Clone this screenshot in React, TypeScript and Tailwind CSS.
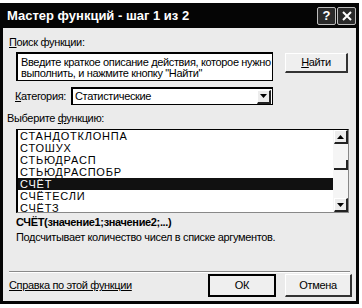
import React from 'react';

const functions = ['СТАНДОТКЛОНПА', 'СТОШУХ', 'СТЬЮДРАСП', 'СТЬЮДРАСПОБР', 'СЧЁТ', 'СЧЁТЕСЛИ', 'СЧЁТЗ'];

const ArrowUp = () => (
  <svg width="7" height="4" viewBox="0 0 7 4"><path d="M0 4 L3.5 0 L7 4 Z" fill="#000" /></svg>
);
const ArrowDown = () => (
  <svg width="7" height="4" viewBox="0 0 7 4"><path d="M0 0 L7 0 L3.5 4 Z" fill="#000" /></svg>
);

const ScrollButton: React.FC<{ children: React.ReactNode }> = ({ children }) => (
  <div className="w-[14px] h-[14px] flex items-center justify-center bg-[#ececec] border-r-2 border-b-2 border-r-[#222] border-b-[#222] border-t border-l border-t-white border-l-white">
    {children}
  </div>
);

export default function App() {
  const selected = 'СЧЁТ';

  return (
    <div className="w-[362px] h-[308px] bg-white pt-[3px] font-['Liberation_Sans',Arial,sans-serif] text-[11px] text-black">
      <div className="w-[359px] h-[301px] bg-[#050505] px-[3px] pb-[3px] flex flex-col">
        {/* Title bar */}
        <div className="h-[25px] flex items-center justify-between pl-[4px] shrink-0">
          <span className="text-white font-bold text-[13px]">Мастер функций - шаг 1 из 2</span>
          <div className="flex items-center gap-[1px]">
            <div className="w-[19px] h-[18px] rounded-[2px] border border-[#bdbdbd] bg-[#2a2a2a] flex items-center justify-center text-white font-bold text-[13px] leading-none">?</div>
            <div className="w-[19px] h-[18px] rounded-[2px] border border-[#bdbdbd] bg-[#2a2a2a] flex items-center justify-center">
              <svg width="10" height="10" viewBox="0 0 10 10"><path d="M1 1 L9 9 M9 1 L1 9" stroke="#fff" strokeWidth="2" /></svg>
            </div>
          </div>
        </div>

        {/* Body */}
        <div className="flex-1 bg-[#ebebeb] flex flex-col tracking-[-0.35px]">
          <div className="pl-[6px] mt-[8px] h-[13px] leading-[13px]">
            <span className="underline">П</span>оиск функции:
          </div>

          <div className="flex items-start mt-[3px] pl-[13px]">
            <div className="w-[257px] h-[29px] bg-white border border-black border-t-2 border-l-2 pl-[3px] pt-[3px] leading-[11px] whitespace-nowrap overflow-hidden">
              Введите краткое описание действия, которое нужно<br />
              выполнить, и нажмите кнопку "Найти"
            </div>
            <button className="ml-[12px] mt-[1px] w-[63px] h-[20px] bg-[#efefef] border border-t-white border-l-white border-r-[#333] border-b-[#333] border-r-2 border-b-2">
              <span className="underline">Н</span>айти
            </button>
          </div>

          <div className="flex items-center mt-[6px] pl-[12px] h-[18px]">
            <span className="w-[56px]"><span className="underline">К</span>атегория:</span>
            <div className="w-[202px] h-[18px] bg-white border border-black border-t-2 border-l-2 flex items-center justify-between pl-[2px]">
              <span>Статистические</span>
              <div className="w-[14px] h-[14px] mr-[1px] bg-[#ececec] border-r-2 border-b-2 border-r-[#222] border-b-[#222] border-t border-l border-t-white border-l-white flex items-center justify-center">
                <ArrowDown />
              </div>
            </div>
          </div>

          <div className="pl-[4px] mt-[7px] h-[13px] leading-[13px]">
            Выберите <span className="underline">ф</span>ункцию:
          </div>

          <div className="ml-[13px] mt-[4px] w-[333px] h-[84px] bg-white border border-black border-l-2 border-r-[#888] border-b-[#888] flex">
            <div className="flex-1 flex flex-col tracking-[0.8px]">
              {functions.map((f) => (
                <div
                  key={f}
                  className={
                    f === selected
                      ? 'h-[12px] leading-[12px] pl-[2px] bg-[#111] text-white'
                      : 'h-[12px] leading-[12px] pl-[2px]'
                  }
                >
                  {f}
                </div>
              ))}
            </div>
            <div className="w-[15px] bg-[#f5f5f5] flex flex-col justify-between items-end">
              <ScrollButton><ArrowUp /></ScrollButton>
              <div className="w-[14px] h-[10px] border-r-2 border-b-2 border-r-[#222] border-b-[#222] -mt-[12px]" />
              <ScrollButton><ArrowDown /></ScrollButton>
            </div>
          </div>

          <div className="pl-[13px] mt-[3px] font-bold h-[13px] leading-[13px]">СЧЁТ(значение1;значение2;...)</div>
          <div className="pl-[13px] mt-[2px] h-[13px] leading-[13px]">Подсчитывает количество чисел в списке аргументов.</div>

          <div className="mx-[6px] mt-[27px] h-[2px] border-t border-t-[#8a8a8a] border-b border-b-white" />

          <div className="flex items-center mt-[1px] pl-[6px]">
            <span className="underline flex-1">Справка по этой функции</span>
            <button className="w-[68px] h-[23px] bg-[#efefef] border-2 border-black">ОК</button>
            <button className="ml-[9px] mr-[4px] w-[67px] h-[23px] bg-[#efefef] border border-t-white border-l-white border-r-[#333] border-b-[#333] border-r-2 border-b-2">Отмена</button>
          </div>
        </div>
      </div>
    </div>
  );
}
